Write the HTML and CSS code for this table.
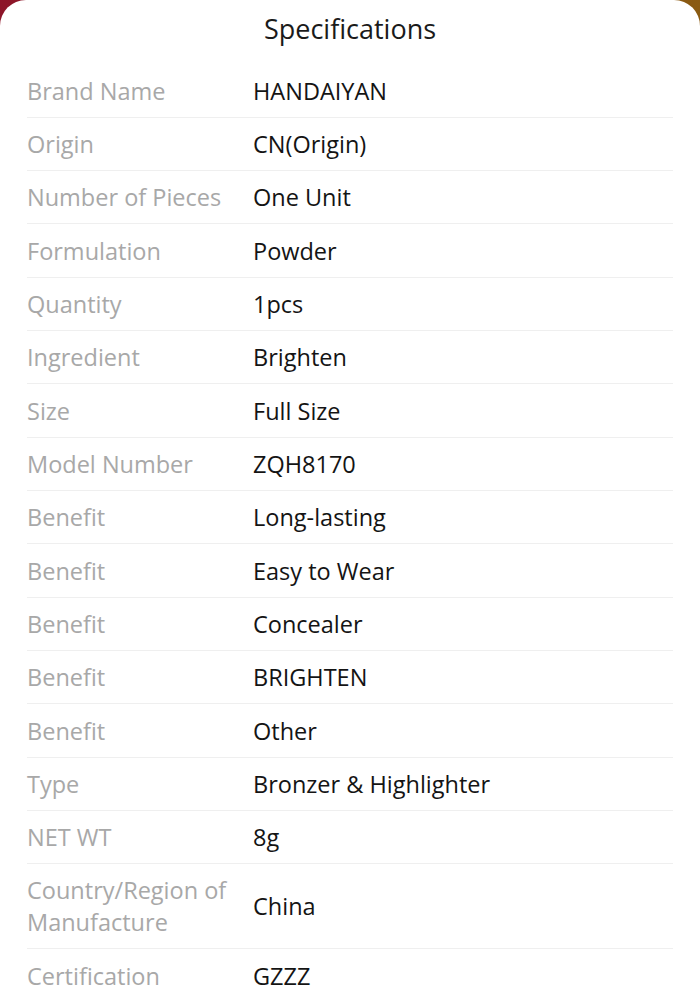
FILE: index.html
```html
<!DOCTYPE html>
<html>
<head>
<meta charset="utf-8">
<link rel="stylesheet" href="styles.css">
</head>
<body>
<div class="sheet">
  <h1 class="title">Specifications</h1>
  <div class="specs">
    <div class="row"><span class="label">Brand Name</span><span class="value">HANDAIYAN</span></div>
    <div class="row"><span class="label">Origin</span><span class="value">CN(Origin)</span></div>
    <div class="row"><span class="label">Number of Pieces</span><span class="value">One Unit</span></div>
    <div class="row"><span class="label">Formulation</span><span class="value">Powder</span></div>
    <div class="row"><span class="label">Quantity</span><span class="value">1pcs</span></div>
    <div class="row"><span class="label">Ingredient</span><span class="value">Brighten</span></div>
    <div class="row"><span class="label">Size</span><span class="value">Full Size</span></div>
    <div class="row"><span class="label">Model Number</span><span class="value">ZQH8170</span></div>
    <div class="row"><span class="label">Benefit</span><span class="value">Long-lasting</span></div>
    <div class="row"><span class="label">Benefit</span><span class="value">Easy to Wear</span></div>
    <div class="row"><span class="label">Benefit</span><span class="value">Concealer</span></div>
    <div class="row"><span class="label">Benefit</span><span class="value">BRIGHTEN</span></div>
    <div class="row"><span class="label">Benefit</span><span class="value">Other</span></div>
    <div class="row"><span class="label">Type</span><span class="value">Bronzer &amp; Highlighter</span></div>
    <div class="row"><span class="label">NET WT</span><span class="value">8g</span></div>
    <div class="row tall"><span class="label">Country/Region of Manufacture</span><span class="value">China</span></div>
    <div class="row"><span class="label">Certification</span><span class="value">GZZZ</span></div>
  </div>
</div>
</body>
</html>
```

FILE: styles.css
```css
html, body {
  margin: 0;
  padding: 0;
}
body {
  width: 700px;
  height: 999px;
  overflow: hidden;
  background: linear-gradient(90deg, #8d1529 0%, #8c3a1e 50%, #8a5b12 100%);
  font-family: "Open Sans", "Liberation Sans", sans-serif;
}
.sheet {
  background: #fff;
  border-radius: 26px 26px 0 0;
  height: 999px;
  box-sizing: border-box;
  padding: 0 27px;
}
.title {
  margin: 0;
  height: 64.5px;
  display: flex;
  align-items: center;
  justify-content: center;
  font-size: 27px;
  font-weight: 400;
  color: #1a1a1a;
  padding-bottom: 8px;
  box-sizing: border-box;
}
.specs {
  display: flex;
  flex-direction: column;
}
.row {
  display: flex;
  align-items: center;
  height: 53.33px;
  box-sizing: border-box;
  border-bottom: 1px solid #efefef;
  font-size: 23.5px;
  line-height: 32px;
}
.row.tall {
  height: 85px;
}
.label {
  width: 226px;
  flex: none;
  color: #a8a8a8;
  padding-right: 10px;
  box-sizing: border-box;
}
.value {
  color: #141414;
}
```
